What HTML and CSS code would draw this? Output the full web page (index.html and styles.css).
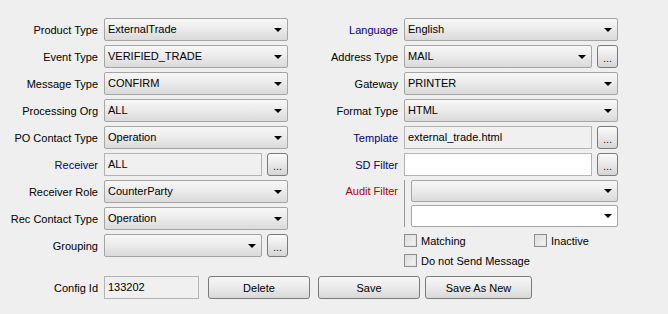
FILE: index.html
```html
<!DOCTYPE html>
<html>
<head>
  <title>Message Config</title>
<link rel="stylesheet" href="styles.css">
</head>
<body>
<div class="panel">
  <div class="cols">
    <div class="col left">
      <div class="row"><label>Product Type</label><div class="combo">ExternalTrade</div></div>
      <div class="row"><label>Event Type</label><div class="combo">VERIFIED_TRADE</div></div>
      <div class="row"><label>Message Type</label><div class="combo">CONFIRM</div></div>
      <div class="row"><label>Processing Org</label><div class="combo">ALL</div></div>
      <div class="row"><label>PO Contact Type</label><div class="combo">Operation</div></div>
      <div class="row"><label class="blue">Receiver</label><div class="field">ALL</div><button class="dots">...</button></div>
      <div class="row"><label>Receiver Role</label><div class="combo">CounterParty</div></div>
      <div class="row"><label>Rec Contact Type</label><div class="combo">Operation</div></div>
      <div class="row"><label>Grouping</label><div class="combo"></div><button class="dots">...</button></div>
    </div>
    <div class="col right">
      <div class="row"><label class="blue">Language</label><div class="combo">English</div></div>
      <div class="row"><label>Address Type</label><div class="combo">MAIL</div><button class="dots">...</button></div>
      <div class="row"><label>Gateway</label><div class="combo">PRINTER</div></div>
      <div class="row"><label>Format Type</label><div class="combo">HTML</div></div>
      <div class="row"><label class="blue">Template</label><div class="field">external_trade.html</div><button class="dots">...</button></div>
      <div class="row"><label class="blue">SD Filter</label><div class="field white"></div><button class="dots">...</button></div>
      <div class="audit">
        <label class="red">Audit Filter</label>
        <div class="audit-box">
          <div class="combo short"></div>
          <div class="combo short white"></div>
        </div>
      </div>
      <div class="checks">
        <div class="check-line">
          <span class="check wide"><span class="box"></span>Matching</span>
          <span class="check"><span class="box"></span>Inactive</span>
        </div>
        <div class="check-line">
          <span class="check"><span class="box"></span>Do not Send Message</span>
        </div>
      </div>
    </div>
  </div>
  <div class="bottom">
    <div class="row"><label>Config Id</label><div class="field id">133202</div></div>
    <div class="actions">
      <button class="btn">Delete</button>
      <button class="btn save">Save</button>
      <button class="btn new">Save As New</button>
    </div>
  </div>
</div>
</body>
</html>
```

FILE: styles.css
```css
* {
  box-sizing: border-box;
  margin: 0;
  padding: 0;
}

body {
  font-family: 'Liberation Sans', Arial, sans-serif;
  font-size: 11px;
  color: #000;
  background-color: #efefef;
  width: 668px;
  height: 314px;
  overflow: hidden;
}

.panel {
  padding: 18px 0 0 6px;
}

.cols {
  display: flex;
  gap: 12px;
}

.col {
  display: flex;
  flex-direction: column;
  gap: 4px;
}

.left {
  width: 282px;
}

.right {
  width: 318px;
}

.row {
  display: flex;
  align-items: center;
  height: 23px;
}

label {
  flex: none;
  text-align: right;
  padding-right: 6px;
  white-space: nowrap;
}

.left label,
.bottom label {
  width: 98px;
}

.right label {
  width: 104px;
}

label.blue {
  color: #000080;
}

label.red {
  color: #b00000;
}

/* combo boxes */
.combo {
  flex: 1;
  height: 23px;
  line-height: 21px;
  padding-left: 3px;
  border: 1px solid #a5a5a5;
  border-radius: 2px;
  background: linear-gradient(#f7f7f7 0%, #ececec 45%, #dadada 100%);
  position: relative;
}

.combo::after {
  content: "";
  position: absolute;
  right: 5px;
  top: 9px;
  border-left: 4px solid transparent;
  border-right: 4px solid transparent;
  border-top: 4px solid #000;
}

.combo.white {
  background: #fff;
}

.field {
  flex: 1;
  height: 23px;
  line-height: 21px;
  padding-left: 3px;
  border: 1px solid #b4b4b4;
  background: #f0f0f0;
}

.field.white {
  background: #fff;
}

.field.id {
  flex: none;
  width: 95px;
}

.dots {
  flex: none;
  width: 21px;
  height: 23px;
  margin-left: 5px;
  border: 1px solid #7a7a7a;
  border-radius: 3px;
  background: linear-gradient(#fbfbfb, #e4e4e4 60%, #d6d6d6);
  font-family: 'Liberation Sans', Arial, sans-serif;
  font-size: 11px;
  line-height: 21px;
  padding-top: 2px;
  color: #222;
}

/* audit filter */
.audit {
  display: flex;
  align-items: flex-start;
}

.audit label {
  line-height: 23px;
}

.audit-box {
  flex: 1;
  display: flex;
  flex-direction: column;
  gap: 3px;
  border-left: 1px solid #9a9a9a;
  padding-left: 6px;
}

.combo.short {
  flex: none;
  height: 22px;
  line-height: 20px;
}

.combo.short::after {
  top: 8px;
}

.checks {
  padding-left: 104px;
  display: flex;
  flex-direction: column;
  gap: 7px;
  margin-top: 3px;
}

.check-line {
  display: flex;
  height: 13px;
  align-items: center;
}

.check {
  display: flex;
  align-items: center;
  white-space: nowrap;
}

.check.wide {
  width: 130px;
}

.box {
  width: 13px;
  height: 13px;
  margin-right: 4px;
  border: 1px solid #8e8e8e;
  background: linear-gradient(135deg, #dcdcdc, #f4f4f4);
  box-shadow: inset 0 0 0 1px #e2e2e2;
}

/* bottom bar */
.bottom {
  display: flex;
  align-items: center;
  margin-top: 9px;
}

.actions {
  display: flex;
  margin-left: 9px;
}

.btn {
  width: 102px;
  height: 23px;
  border: 1px solid #7a7a7a;
  border-radius: 3px;
  background: linear-gradient(#f6f6f6, #ececec 45%, #d9d9d9);
  font-family: 'Liberation Sans', Arial, sans-serif;
  font-size: 11px;
  color: #000;
}

.btn.save {
  margin-left: 8px;
}

.btn.new {
  margin-left: 5px;
  width: 107px;
}
```
